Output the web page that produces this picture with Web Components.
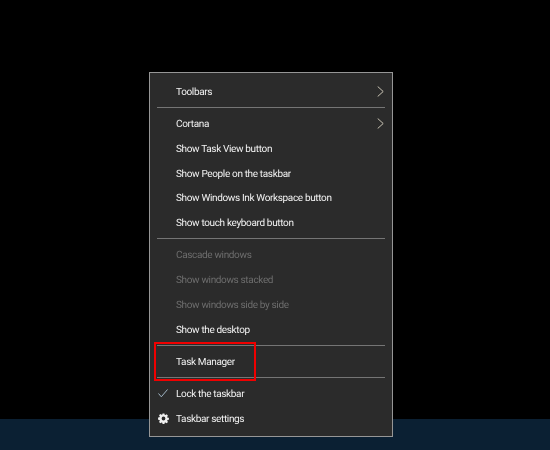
<!DOCTYPE html>
<html>
<head>
<meta charset="utf-8">
<title>Taskbar menu</title>
<style>
  html, body { margin: 0; height: 100%; background: #000; }
</style>
</head>
<body>
<win-desktop>
  <context-menu>
    <menu-item arrow>Toolbars</menu-item>
    <menu-sep></menu-sep>
    <menu-item arrow>Cortana</menu-item>
    <menu-item>Show Task View button</menu-item>
    <menu-item>Show People on the taskbar</menu-item>
    <menu-item>Show Windows Ink Workspace button</menu-item>
    <menu-item>Show touch keyboard button</menu-item>
    <menu-sep></menu-sep>
    <menu-item disabled>Cascade windows</menu-item>
    <menu-item disabled>Show windows stacked</menu-item>
    <menu-item disabled>Show windows side by side</menu-item>
    <menu-item>Show the desktop</menu-item>
    <menu-sep></menu-sep>
    <menu-item>Task Manager</menu-item>
    <menu-sep></menu-sep>
    <menu-item icon="check">Lock the taskbar</menu-item>
    <menu-item icon="gear">Taskbar settings</menu-item>
    <red-box></red-box>
  </context-menu>
</win-desktop>

<script>
const ICONS = {
  check: `<svg width="10" height="9" viewBox="0 0 10 9"><path d="M.5 4.500 L3.300 7.800 L9.500 .5" fill="none" stroke="#9fb4c4" stroke-width="1"/></svg>`,
  gear: `<svg width="11" height="11" viewBox="0 0 14 14"><path fill="#f0f0f0" fill-rule="evenodd" d="M5.800 .5h2.400l.3 1.800 1 .4 1.500-1 1.700 1.700-1 1.500.4 1 1.800.3v2.400l-1.800.3-.4 1 1 1.500-1.700 1.700-1.500-1-1 .4-.3 1.800H5.800l-.3-1.800-1-.4-1.500 1-1.700-1.700 1-1.500-.4-1-1.800-.3V5.800l1.800-.3.4-1-1-1.500 1.700-1.700 1.500 1 1-.4zM7 4.600a2.400 2.400 0 1 0 0 4.800 2.400 2.400 0 0 0 0-4.800z"/></svg>`
};

class WinDesktop extends HTMLElement {
  constructor() {
    super();
    this.attachShadow({ mode: 'open' }).innerHTML = `
    <style>
      :host {
        display: flex;
        flex-direction: column;
        position: relative;
        width: 550px;
        height: 450px;
        overflow: hidden;
        background: #000;
      }
      .space { flex: 1; }
      .taskbar { height: 31px; background: #0b2033; }
    </style>
    <div class="space"></div>
    <div class="taskbar"></div>
    <slot></slot>
    `;
  }
}

class ContextMenu extends HTMLElement {
  constructor() {
    super();
    this.attachShadow({ mode: 'open' }).innerHTML = `
    <style>
      :host {
        display: block;
        position: absolute;
        left: 149px;
        top: 72px;
        width: 244px;
        box-sizing: border-box;
        padding: 6px 0 5.500px;
        background: #2b2b2b;
        border: 1px solid #969696;
        font-family: Roboto, Lato, sans-serif;
        font-size: 10px;
        letter-spacing: -0.350px;
        text-rendering: geometricPrecision;
        color: #f2f2f2;
      }
    </style>
    <slot></slot>
    `;
  }
}

class MenuItem extends HTMLElement {
  constructor() {
    super();
    const icon = ICONS[this.getAttribute('icon')] || '';
    const arrow = this.hasAttribute('arrow')
      ? `<svg width="7" height="11" viewBox="0 0 7 11"><path d="M.7 .5 L6.200 5.500 L.7 10.500" fill="none" stroke="#c9c4b4" stroke-width="1"/></svg>`
      : '';
    this.attachShadow({ mode: 'open' }).innerHTML = `
    <style>
      :host {
        display: flex;
        align-items: center;
        height: 24.850px;
        padding: 0 8px;
      }
      :host([disabled]) { color: #6d6d6d; }
      .icon { width: 18px; display: flex; align-items: center; }
      .label { flex: 1; white-space: nowrap; padding-top: 2px; filter: blur(0.25px); }
    </style>
    <span class="icon">${icon}</span>
    <span class="label"><slot></slot></span>
    ${arrow}
    `;
  }
}

class MenuSep extends HTMLElement {
  constructor() {
    super();
    this.attachShadow({ mode: 'open' }).innerHTML = `
    <style>
      :host {
        display: block;
        height: 1px;
        margin: 3.100px 7px;
        background: #757575;
      }
    </style>
    `;
  }
}

class RedBox extends HTMLElement {
  constructor() {
    super();
    this.attachShadow({ mode: 'open' }).innerHTML = `
    <style>
      :host {
        display: block;
        position: absolute;
        left: 4px;
        top: 269px;
        width: 102px;
        height: 39px;
        box-sizing: border-box;
        border: 2px solid #f00000;
      }
    </style>
    `;
  }
}

customElements.define('win-desktop', WinDesktop);
customElements.define('context-menu', ContextMenu);
customElements.define('menu-item', MenuItem);
customElements.define('menu-sep', MenuSep);
customElements.define('red-box', RedBox);
</script>
</body>
</html>
